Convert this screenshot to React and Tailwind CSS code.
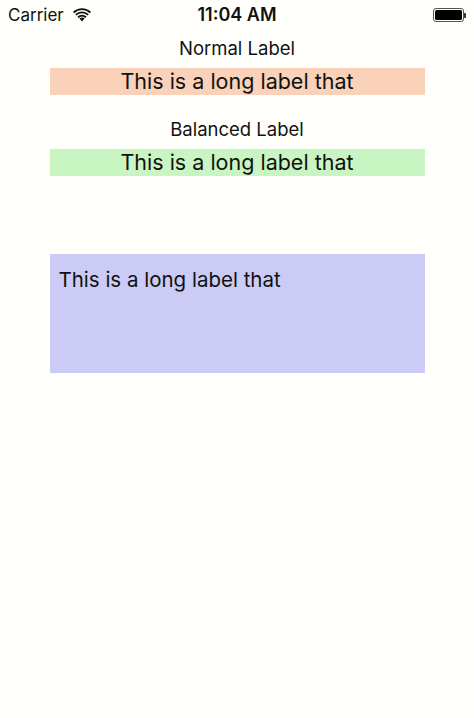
import React from "react";

export default function App() {
  return (
    <div className="w-[474px] h-[718px] bg-[#fffffb] text-[#111] flex flex-col" style={{ fontFamily: "Inter, 'Noto Sans', sans-serif" }}>
      <div className="h-[30px] flex items-center justify-between px-[8px] relative">
        <div className="flex items-center gap-[9px] text-[17px] leading-none">
          <span>Carrier</span>
          <svg width="18" height="14" viewBox="0 0 18 14">
            <path d="M9 13.5 L11.6 10.6 A3.8 3.8 0 0 0 6.4 10.6 Z" fill="#111" />
            <path d="M4.4 8.6 A6.6 6.6 0 0 1 13.6 8.6 L12.3 10 A4.8 4.8 0 0 0 5.7 10 Z" fill="#111" />
            <path d="M2.2 6.2 A9.8 9.8 0 0 1 15.8 6.2 L14.5 7.6 A7.9 7.9 0 0 0 3.5 7.6 Z" fill="#111" />
            <path d="M0 3.8 A13 13 0 0 1 18 3.8 L16.7 5.2 A11.1 11.1 0 0 0 1.3 5.2 Z" fill="#111" />
          </svg>
        </div>
        <div className="absolute left-0 right-0 text-center text-[18px] font-semibold leading-none pointer-events-none">11:04 AM</div>
        <div className="flex items-center">
          <div className="w-[31px] h-[14px] rounded-[3px] border border-[#555] p-[1px]">
            <div className="w-full h-full bg-black rounded-[1.5px]" />
          </div>
          <div className="w-[2px] h-[5px] bg-[#333] rounded-r-[1px]" />
        </div>
      </div>
      <div className="flex flex-col items-center">
        <div className="mt-[7px] text-[18.5px] leading-[22px]">Normal Label</div>
        <div className="mt-[9px] w-[375px] h-[27px] bg-[#f9d2b9] flex items-center justify-center text-[21.5px] leading-none">This is a long label that</div>
        <div className="mt-[23px] text-[18.5px] leading-[22px]">Balanced Label</div>
        <div className="mt-[9px] w-[375px] h-[27px] bg-[#c9f5c2] flex items-center justify-center text-[21.5px] leading-none">This is a long label that</div>
        <div className="mt-[78px] w-[375px] h-[119px] bg-[#cbcbf6] px-[9px] pt-[13px] text-[20.5px] leading-[26px]">This is a long label that</div>
      </div>
    </div>
  );
}
